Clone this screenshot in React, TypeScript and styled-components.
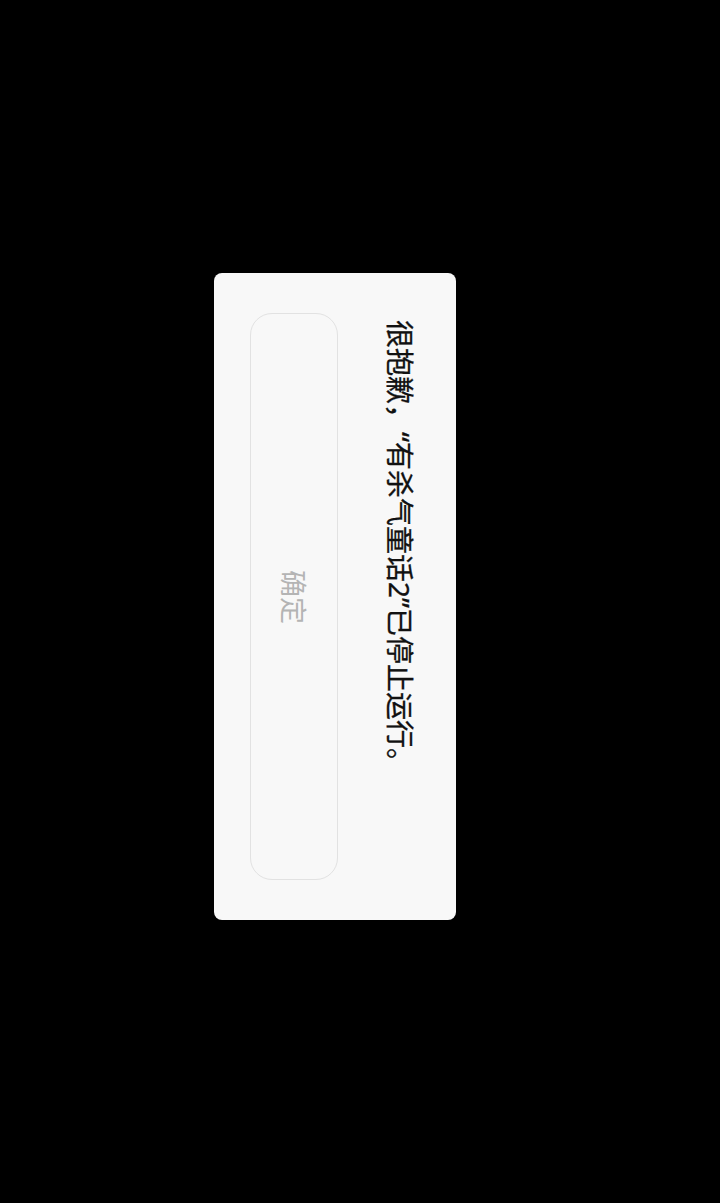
import React from "react";
import styled, { createGlobalStyle } from "styled-components";

const Global = createGlobalStyle`
  html, body {
    margin: 0;
    padding: 0;
    background: #000;
    width: 720px;
    height: 1203px;
    overflow: hidden;
  }
  #root {
    font-family: "Noto Sans CJK SC", "Noto Sans", sans-serif;
  }
`;

const Screen = styled.div`
  width: 720px;
  height: 1203px;
  box-sizing: border-box;
  padding: 273px 0 0 214px;
  display: flex;
  align-items: flex-start;
`;

const Dialog = styled.div`
  writing-mode: vertical-rl;
  text-orientation: sideways;
  box-sizing: border-box;
  inline-size: 647px;
  block-size: 242px;
  background: #f8f8f8;
  border-radius: 8px;
  padding-block: 42px 36px;
  padding-inline: 40px;
  display: flex;
  flex-direction: column;
  gap: 48px;
`;

const Message = styled.div`
  font-family: "Noto Sans", "Noto Sans CJK SC", sans-serif;
  font-size: 28px;
  line-height: 28px;
  color: #111;
  padding-inline-start: 7px;
  white-space: nowrap;
  -webkit-text-stroke: 0.3px #111;
`;

const Button = styled.button`
  writing-mode: vertical-rl;
  text-orientation: sideways;
  box-sizing: border-box;
  inline-size: 567px;
  block-size: 88px;
  margin: 0;
  padding: 0;
  background: transparent;
  border: 1px solid #e2e2e2;
  border-radius: 22px;
  font-family: "Noto Sans CJK SC", "Noto Sans", sans-serif;
  font-size: 27px;
  color: #b4b4b4;
  display: flex;
  align-items: center;
  justify-content: center;
`;

export default function App() {
  return (
    <>
      <Global />
      <Screen>
        <Dialog>
          <Message>很抱歉，“有杀气童话2”已停止运行。</Message>
          <Button>确定</Button>
        </Dialog>
      </Screen>
    </>
  );
}
